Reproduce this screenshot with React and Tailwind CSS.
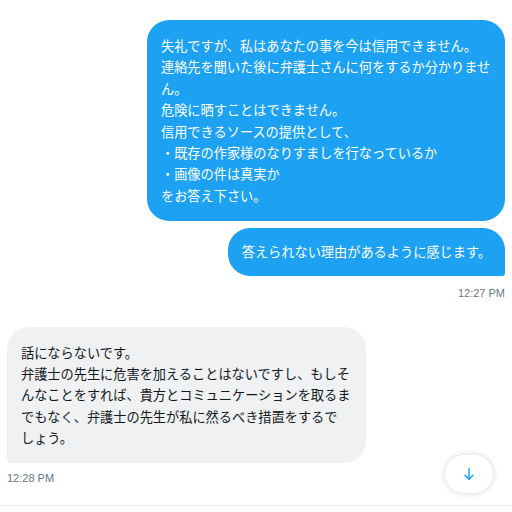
import React from 'react';

const jp = { fontFamily: '"Noto Sans CJK JP", "Noto Sans", sans-serif' };
const meta = { fontFamily: '"Liberation Sans", Arial, sans-serif' };

const Bubble = ({ mine, tail, className = '', children }) => (
  <div
    className={`text-[13.2px] leading-[21.4px] px-[14px] ${
      mine ? 'bg-[#1da1f2] text-white' : 'bg-[#eff1f3] text-[#14171a]'
    } ${tail ? (mine ? 'rounded-[22px] rounded-br-[3px]' : 'rounded-[22px] rounded-bl-[4px]') : 'rounded-[22px]'} ${className}`}
    style={jp}
  >
    {children}
  </div>
);

const Stamp = ({ children, className = '' }) => (
  <div className={`text-[11px] leading-[14px] text-[#657786] ${className}`} style={meta}>
    {children}
  </div>
);

export default function App() {
  return (
    <div className="w-[512px] h-[512px] bg-white overflow-hidden relative">
      <div className="flex flex-col pt-[20px]">
        <div className="flex flex-col items-end pr-[7px]">
          <Bubble mine className="w-[358px] pt-[15px] pb-[15px]">
            <p>失礼ですが、私はあなたの事を今は信用できません。</p>
            <p>連絡先を聞いた後に弁護士さんに何をするか分かりません。</p>
            <p>危険に晒すことはできません。</p>
            <p>信用できるソースの提供として、</p>
            <p>・既存の作家様のなりすましを行なっているか</p>
            <p>・画像の件は真実か</p>
            <p>をお答え下さい。</p>
          </Bubble>
          <Bubble mine tail className="mt-[7px] py-[13px]">
            答えられない理由があるように感じます。
          </Bubble>
          <Stamp className="mt-[10px]">12:27 PM</Stamp>
        </div>

        <div className="flex flex-col items-start pl-[7px] mt-[27px]">
          <Bubble tail className="w-[359px] pt-[15px] pb-[14px]">
            <p>話にならないです。</p>
            <p>弁護士の先生に危害を加えることはないですし、もしそんなことをすれば、貴方とコミュニケーションを取るまでもなく、弁護士の先生が私に然るべき措置をするで<span className="whitespace-nowrap">しょう。</span></p>
          </Bubble>
          <Stamp className="mt-[8px]">12:28 PM</Stamp>
        </div>
      </div>

      <button className="absolute left-[445px] top-[455px] w-[48px] h-[38px] rounded-[19px] bg-white shadow-[0_0_6px_rgba(0,0,0,0.18)] flex items-center justify-center">
        <svg width="16" height="16" viewBox="0 0 24 24" fill="none" stroke="#1da1f2" strokeWidth="2.2" strokeLinecap="round" strokeLinejoin="round">
          <path d="M12 4v16" />
          <path d="M6 14l6 6 6-6" />
        </svg>
      </button>

      <div className="absolute left-0 right-0 top-[505px] border-t border-[#e6ecf0]" />
    </div>
  );
}
